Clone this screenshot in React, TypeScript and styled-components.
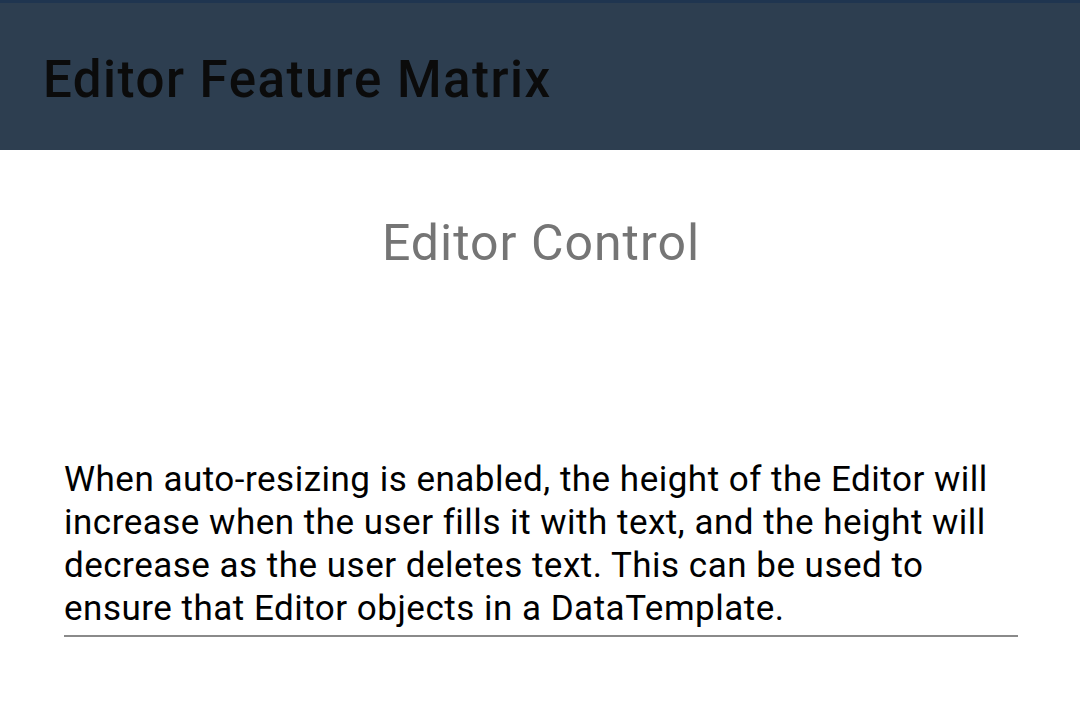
import React from 'react';
import styled, { createGlobalStyle } from 'styled-components';

const GlobalStyle = createGlobalStyle`
  html, body {
    margin: 0;
    padding: 0;
    background: #ffffff;
    font-family: Roboto, "Noto Sans", sans-serif;
  }
`;

const Page = styled.div`
  display: flex;
  flex-direction: column;
  width: 1080px;
  height: 710px;
  overflow: hidden;
  background: #ffffff;
`;

// navigation bar with the page title
const NavBar = styled.header`
  display: flex;
  align-items: center;
  height: 147px;
  padding: 0 43px;
  background-color: #2d3e50;
  border-top: 3px solid #1f3550;
`;

const NavTitle = styled.h1`
  margin: 0;
  padding-top: 6px;
  font-family: Roboto, sans-serif;
  font-size: 51px;
  font-weight: 500;
  letter-spacing: 1.5px;
  color: #0b0b0b;
`;

const Content = styled.main`
  display: flex;
  flex-direction: column;
  padding: 0 62px 0 64px;
`;

const Heading = styled.h2`
  margin: 0;
  padding-top: 60px;
  text-align: center;
  font-family: Roboto, sans-serif;
  font-size: 50px;
  font-weight: 400;
  letter-spacing: 1px;
  line-height: 66px;
  color: #757575;
`;

// auto-sizing editor with an underline
const Editor = styled.div`
  margin-top: 182px;
  padding-bottom: 5px;
  border-bottom: 2px solid #8a8a8a;
  font-family: Roboto, sans-serif;
  font-size: 35px;
  letter-spacing: 0.5px;
  line-height: 43px;
  color: #000000;
`;

export default function App() {
  return (
    <Page>
      <GlobalStyle />
      <NavBar>
        <NavTitle>Editor Feature Matrix</NavTitle>
      </NavBar>
      <Content>
        <Heading>Editor Control</Heading>
        <Editor>
          When auto-resizing is enabled, the height of the Editor will increase
          when the user fills it with text, and the height will decrease as the
          user deletes text. This can be used to ensure that Editor objects in a
          DataTemplate.
        </Editor>
      </Content>
    </Page>
  );
}
